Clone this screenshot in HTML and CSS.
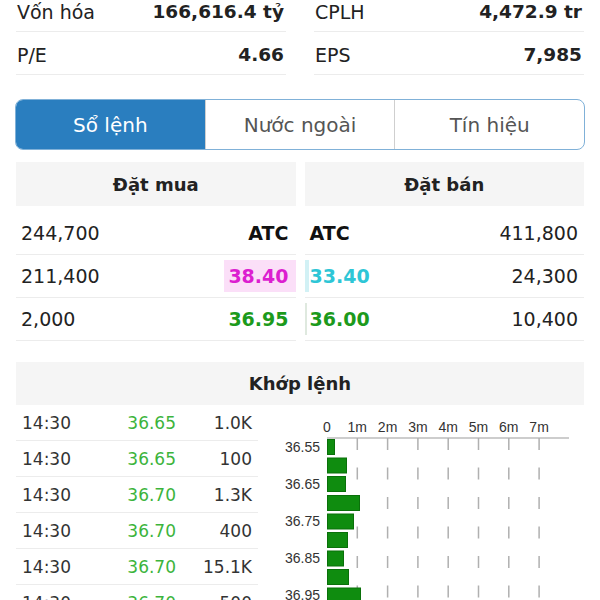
FILE: index.html
```html
<!DOCTYPE html>
<html lang="vi">
<head>
  <meta charset="UTF-8" />
  <meta name="viewport" content="width=device-width, initial-scale=1.0" />
  <title>Sổ lệnh</title>
  <link rel="stylesheet" href="styles.css">
</head>
<body>
  <div class="stats">
    <div class="stat"><span class="label">Vốn hóa</span><span class="value">166,616.4 tỷ</span></div>
    <div class="stat"><span class="label">CPLH</span><span class="value">4,472.9 tr</span></div>
    <div class="stat"><span class="label">P/E</span><span class="value">4.66</span></div>
    <div class="stat"><span class="label">EPS</span><span class="value">7,985</span></div>
  </div>

  <div class="tabs">
    <div class="tab active">Sổ lệnh</div>
    <div class="tab">Nước ngoài</div>
    <div class="tab">Tín hiệu</div>
  </div>

  <div class="book-head">
    <div class="head-cell">Đặt mua</div>
    <div class="head-cell">Đặt bán</div>
  </div>

  <div class="book">
    <div class="cell buy"><span class="qty">244,700</span><span class="px atc">ATC</span></div>
    <div class="cell sell"><span class="px atc">ATC</span><span class="qty">411,800</span></div>

    <div class="cell buy"><span class="qty">211,400</span><span class="px ceil" style="--w: 72px">38.40</span></div>
    <div class="cell sell"><span class="px floor" style="--w: 4px">33.40</span><span class="qty">24,300</span></div>

    <div class="cell buy"><span class="qty">2,000</span><span class="px up" style="--w: 0px">36.95</span></div>
    <div class="cell sell"><span class="px up" style="--w: 2px">36.00</span><span class="qty">10,400</span></div>
  </div>

  <div class="match-head">Khớp lệnh</div>

  <div class="match">
    <div class="trades">
      <div class="trade"><span>14:30</span><span class="t-px">36.65</span><span class="t-vol">1.0K</span></div>
      <div class="trade"><span>14:30</span><span class="t-px">36.65</span><span class="t-vol">100</span></div>
      <div class="trade"><span>14:30</span><span class="t-px">36.70</span><span class="t-vol">1.3K</span></div>
      <div class="trade"><span>14:30</span><span class="t-px">36.70</span><span class="t-vol">400</span></div>
      <div class="trade"><span>14:30</span><span class="t-px">36.70</span><span class="t-vol">15.1K</span></div>
      <div class="trade"><span>14:30</span><span class="t-px">36.70</span><span class="t-vol">500</span></div>
    </div>

    <svg class="chart" width="326" height="200" viewBox="0 0 326 200">
      <g class="axis-labels">
        <text x="69" y="27">0</text>
        <text x="99.3" y="27">1m</text>
        <text x="129.6" y="27">2m</text>
        <text x="159.9" y="27">3m</text>
        <text x="190.2" y="27">4m</text>
        <text x="220.5" y="27">5m</text>
        <text x="250.8" y="27">6m</text>
        <text x="281.1" y="27">7m</text>
      </g>
      <line class="axis" x1="69" y1="33" x2="311" y2="33" />
      <g class="grid">
        <line x1="99.3" y1="33" x2="99.3" y2="200" />
        <line x1="129.6" y1="33" x2="129.6" y2="200" />
        <line x1="159.9" y1="33" x2="159.9" y2="200" />
        <line x1="190.2" y1="33" x2="190.2" y2="200" />
        <line x1="220.5" y1="33" x2="220.5" y2="200" />
        <line x1="250.8" y1="33" x2="250.8" y2="200" />
        <line x1="281.1" y1="33" x2="281.1" y2="200" />
      </g>
      <g class="bars">
        <rect x="69.5" y="34.5" width="7" height="15" />
        <rect x="69.5" y="53" width="19" height="15" />
        <rect x="69.5" y="71.5" width="18" height="15" />
        <rect x="69.5" y="90.5" width="32" height="15" />
        <rect x="69.5" y="109" width="26" height="15" />
        <rect x="69.5" y="127.5" width="20" height="15" />
        <rect x="69.5" y="146" width="16" height="15" />
        <rect x="69.5" y="164.5" width="21" height="15" />
        <rect x="69.5" y="183" width="33" height="15" />
      </g>
      <g class="price-labels">
        <text x="62" y="47">36.55</text>
        <text x="62" y="84">36.65</text>
        <text x="62" y="121">36.75</text>
        <text x="62" y="158">36.85</text>
        <text x="62" y="195">36.95</text>
      </g>
    </svg>
  </div>
</body>
</html>
```

FILE: styles.css
```css
:root {
  --blue: #2a7ebf;
  --line: #ececec;
  --head-bg: #f5f5f5;
  --text: #222;
  --green: #1c9a1c;
  --light-green: #3cb43c;
}

* {
  box-sizing: border-box;
}

body {
  margin: 0;
  padding: 0 16px;
  background: #fff;
  color: var(--text);
  font-family: 'DejaVu Sans', sans-serif;
  overflow: hidden;
}

/* thong tin co ban */
.stats {
  display: grid;
  grid-template-columns: 1fr 1fr;
  column-gap: 28px;
  margin-top: -11px;
}

.stat {
  height: 43px;
  padding: 3px 2px 0 1px;
  display: flex;
  justify-content: space-between;
  align-items: center;
  border-bottom: 1px solid var(--line);
}

.stat .label {
  font-size: 19px;
}

.stat .value {
  font-size: 18.5px;
  font-weight: bold;
}

/* tabs */
.tabs {
  display: flex;
  height: 51px;
  margin: 24px -1px 0;
  border: 1.5px solid #80b1d8;
  border-radius: 8px;
  overflow: hidden;
}

.tab {
  flex: 1;
  display: flex;
  align-items: center;
  justify-content: center;
  font-size: 20px;
  color: #555;
  border-left: 1px solid #cfcfcf;
}

.tab:first-child {
  border-left: none;
}

.tab.active {
  background-color: var(--blue);
  color: #fff;
}

/* so lenh */
.book-head,
.book {
  display: grid;
  grid-template-columns: 1fr 1fr;
  column-gap: 9px;
}

.book-head {
  margin-top: 12px;
}

.head-cell {
  height: 44px;
  display: flex;
  align-items: center;
  justify-content: center;
  background-color: var(--head-bg);
  font-size: 18px;
  font-weight: bold;
}

.book {
  margin-top: 6px;
}

.cell {
  height: 43px;
  display: flex;
  align-items: center;
  justify-content: space-between;
  border-bottom: 1px solid var(--line);
  font-size: 19px;
}

.cell.buy {
  padding-left: 5px;
}

.cell.sell {
  padding-right: 6px;
}

.px {
  height: 32px;
  line-height: 32px;
  font-weight: bold;
  background-repeat: no-repeat;
  background-size: var(--w, 0) 100%;
}

.buy .px {
  padding: 0 7px 0 5px;
  background-position: right center;
}

.sell .px {
  padding: 0 5px 0 5px;
  background-position: left center;
}

.px.atc {
  color: #111;
}

.px.ceil {
  color: #dc1fd0;
  background-image: linear-gradient(#fbdff8, #fbdff8);
}

.px.floor {
  color: #2ec6d6;
  background-image: linear-gradient(#d2f1f5, #d2f1f5);
}

.px.up {
  color: var(--green);
  background-image: linear-gradient(#dfe9df, #dfe9df);
}

/* khop lenh */
.match-head {
  margin-top: 21px;
  height: 43px;
  display: flex;
  align-items: center;
  justify-content: center;
  background-color: var(--head-bg);
  font-size: 18px;
  font-weight: bold;
}

.match {
  display: flex;
}

.trades {
  width: 242px;
  flex-shrink: 0;
}

.trade {
  height: 36px;
  padding: 0 6px;
  display: grid;
  grid-template-columns: 1fr 80px 76px;
  align-items: center;
  border-bottom: 1px solid var(--line);
  font-size: 17px;
  color: #333;
}

.t-px {
  text-align: right;
  color: var(--light-green);
}

.t-vol {
  text-align: right;
}

.chart {
  display: block;
  flex-shrink: 0;
  overflow: visible;
}

.chart text {
  font-family: 'Liberation Sans', Arial, sans-serif;
  font-size: 14px;
  fill: #333;
}

.axis-labels text {
  text-anchor: middle;
}

.price-labels text {
  text-anchor: end;
}

.axis {
  stroke: #bdbdbd;
  stroke-width: 1.5;
}

.grid line {
  stroke: #b0b0b0;
  stroke-width: 1.5;
  stroke-dasharray: 12 17.5;
}

.bars rect {
  fill: #0f8c0f;
  stroke: #0a700a;
  stroke-width: 1;
}
```
